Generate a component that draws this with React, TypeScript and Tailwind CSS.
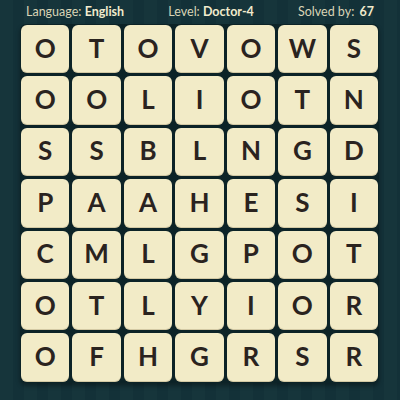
import React from "react";

const rows = [
  "OTOVOWS",
  "OOLIOTN",
  "SSBLNGD",
  "PAAHESI",
  "CMLGPOT",
  "OTLYIOR",
  "OFHGRSR",
];

export default function App() {
  return (
    <div
      className="w-[400px] h-[400px] overflow-hidden bg-[repeating-linear-gradient(90deg,#16353b_0px,#16353b_13px,#133138_13px,#133138_24px)] flex flex-col"
      style={{ fontFamily: "Lato, 'Open Sans', sans-serif" }}
    >
      <div className="h-[23px] flex items-center justify-between pl-[26px] pr-[26px] text-[12.5px] text-[#d9d4b6] leading-none pt-[1px]">
        <span>
          Language: <span className="font-bold text-[#f1ebcd]">English</span>
        </span>
        <span>
          Level: <span className="font-bold text-[#f1ebcd]">Doctor-4</span>
        </span>
        <span>
          Solved by: <span className="font-bold text-[#f1ebcd] ml-[2px]">67</span>
        </span>
      </div>
      <div className="ml-[20px] mt-[1px] w-[359px] p-[1px] bg-[#0c2327] rounded-[6px] shadow-[0_3px_4px_rgba(0,0,0,0.35)]">
        <div className="grid grid-cols-7 gap-[3px]">
          {rows.flatMap((row, r) =>
            row.split("").map((ch, c) => (
              <div
                key={`${r}-${c}`}
                className="h-[48.4px] rounded-[6px] bg-[#f2ebc7] flex items-center justify-center shadow-[inset_0_-1px_0_rgba(120,100,60,0.25)]"
              >
                <span className="text-[26px] font-bold text-[#2a231f] leading-none -mt-[3px]">
                  {ch}
                </span>
              </div>
            ))
          )}
        </div>
      </div>
    </div>
  );
}
